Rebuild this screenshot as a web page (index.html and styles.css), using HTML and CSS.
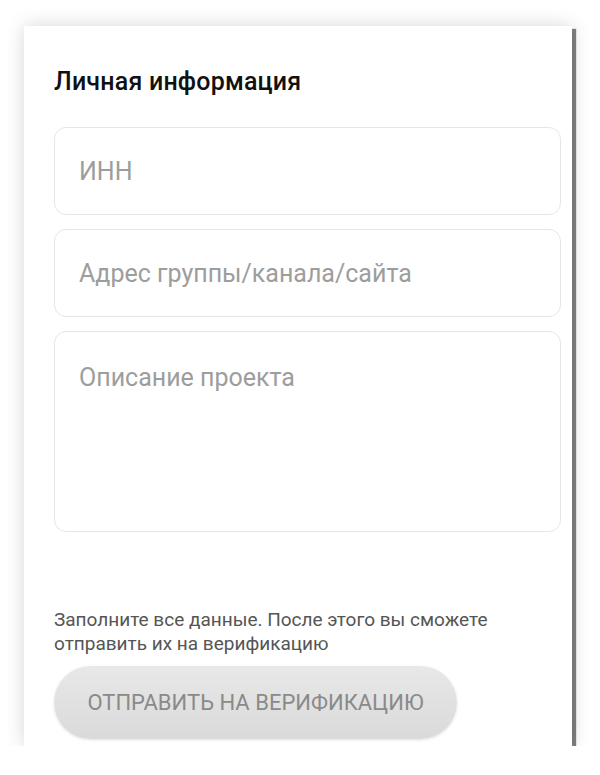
FILE: index.html
```html
<!DOCTYPE html>
<html lang="ru">
<head>
    <meta charset="UTF-8">
    <meta name="viewport" content="width=device-width, initial-scale=1.0">
    <title>Личная информация</title>
    <link rel="stylesheet" href="styles.css">
</head>
<body>
    <div class="card">
        <h2 class="card-title">Личная информация</h2>

        <form class="info-form">
            <input class="field" type="text" placeholder="ИНН">
            <input class="field" type="text" placeholder="Адрес группы/канала/сайта">
            <textarea class="field field-area" placeholder="Описание проекта"></textarea>
        </form>

        <p class="hint">
            Заполните все данные. После этого вы сможете<br>
            отправить их на верификацию
        </p>

        <button class="submit-button" type="button" disabled>Отправить на верификацию</button>
    </div>
</body>
</html>
```

FILE: styles.css
```css
body {
    margin: 0;
    padding: 26px 0 0 24px;
    background: #ffffff;
    font-family: Roboto, "Noto Sans", Arial, sans-serif;
}
.card {
    width: 548px;
    height: 720px;
    box-sizing: border-box;
    padding: 41px 11px 0 30px;
    background: #ffffff;
    box-shadow: 4px 3px 1px rgba(0,0,0,0.5), 0 0 18px rgba(0,0,0,0.16);
}
.card-title {
    margin: 0 0 30px 0;
    font-size: 25px;
    font-weight: 500;
    line-height: 30px;
    letter-spacing: 0.2px;
    color: #111111;
}
.info-form {
    display: flex;
    flex-direction: column;
    gap: 14px;
}
.field {
    display: block;
    width: 100%;
    box-sizing: border-box;
    height: 88px;
    margin: 0;
    padding: 0 24px;
    border: 1px solid #e6e6e6;
    border-radius: 12px;
    background: #ffffff;
    font-family: Roboto, "Noto Sans", Arial, sans-serif;
    font-size: 25px;
    color: #333333;
    outline: none;
}
.field::placeholder {
    color: #9d9d9d;
}
.field-area {
    height: 201px;
    padding-top: 32px;
    line-height: 28px;
    resize: none;
}
.hint {
    margin: 76px 0 0 0;
    font-size: 19px;
    line-height: 24px;
    color: #555555;
}
.submit-button {
    display: block;
    width: 403px;
    height: 73px;
    margin-top: 10px;
    border: none;
    border-radius: 37px;
    background: linear-gradient(#e8e8e8, #dadada);
    box-shadow: 0 1px 3px rgba(0,0,0,0.12);
    font-family: Roboto, "Noto Sans", Arial, sans-serif;
    font-size: 22px;
    text-transform: uppercase;
    color: #8a8a8a;
}
```
